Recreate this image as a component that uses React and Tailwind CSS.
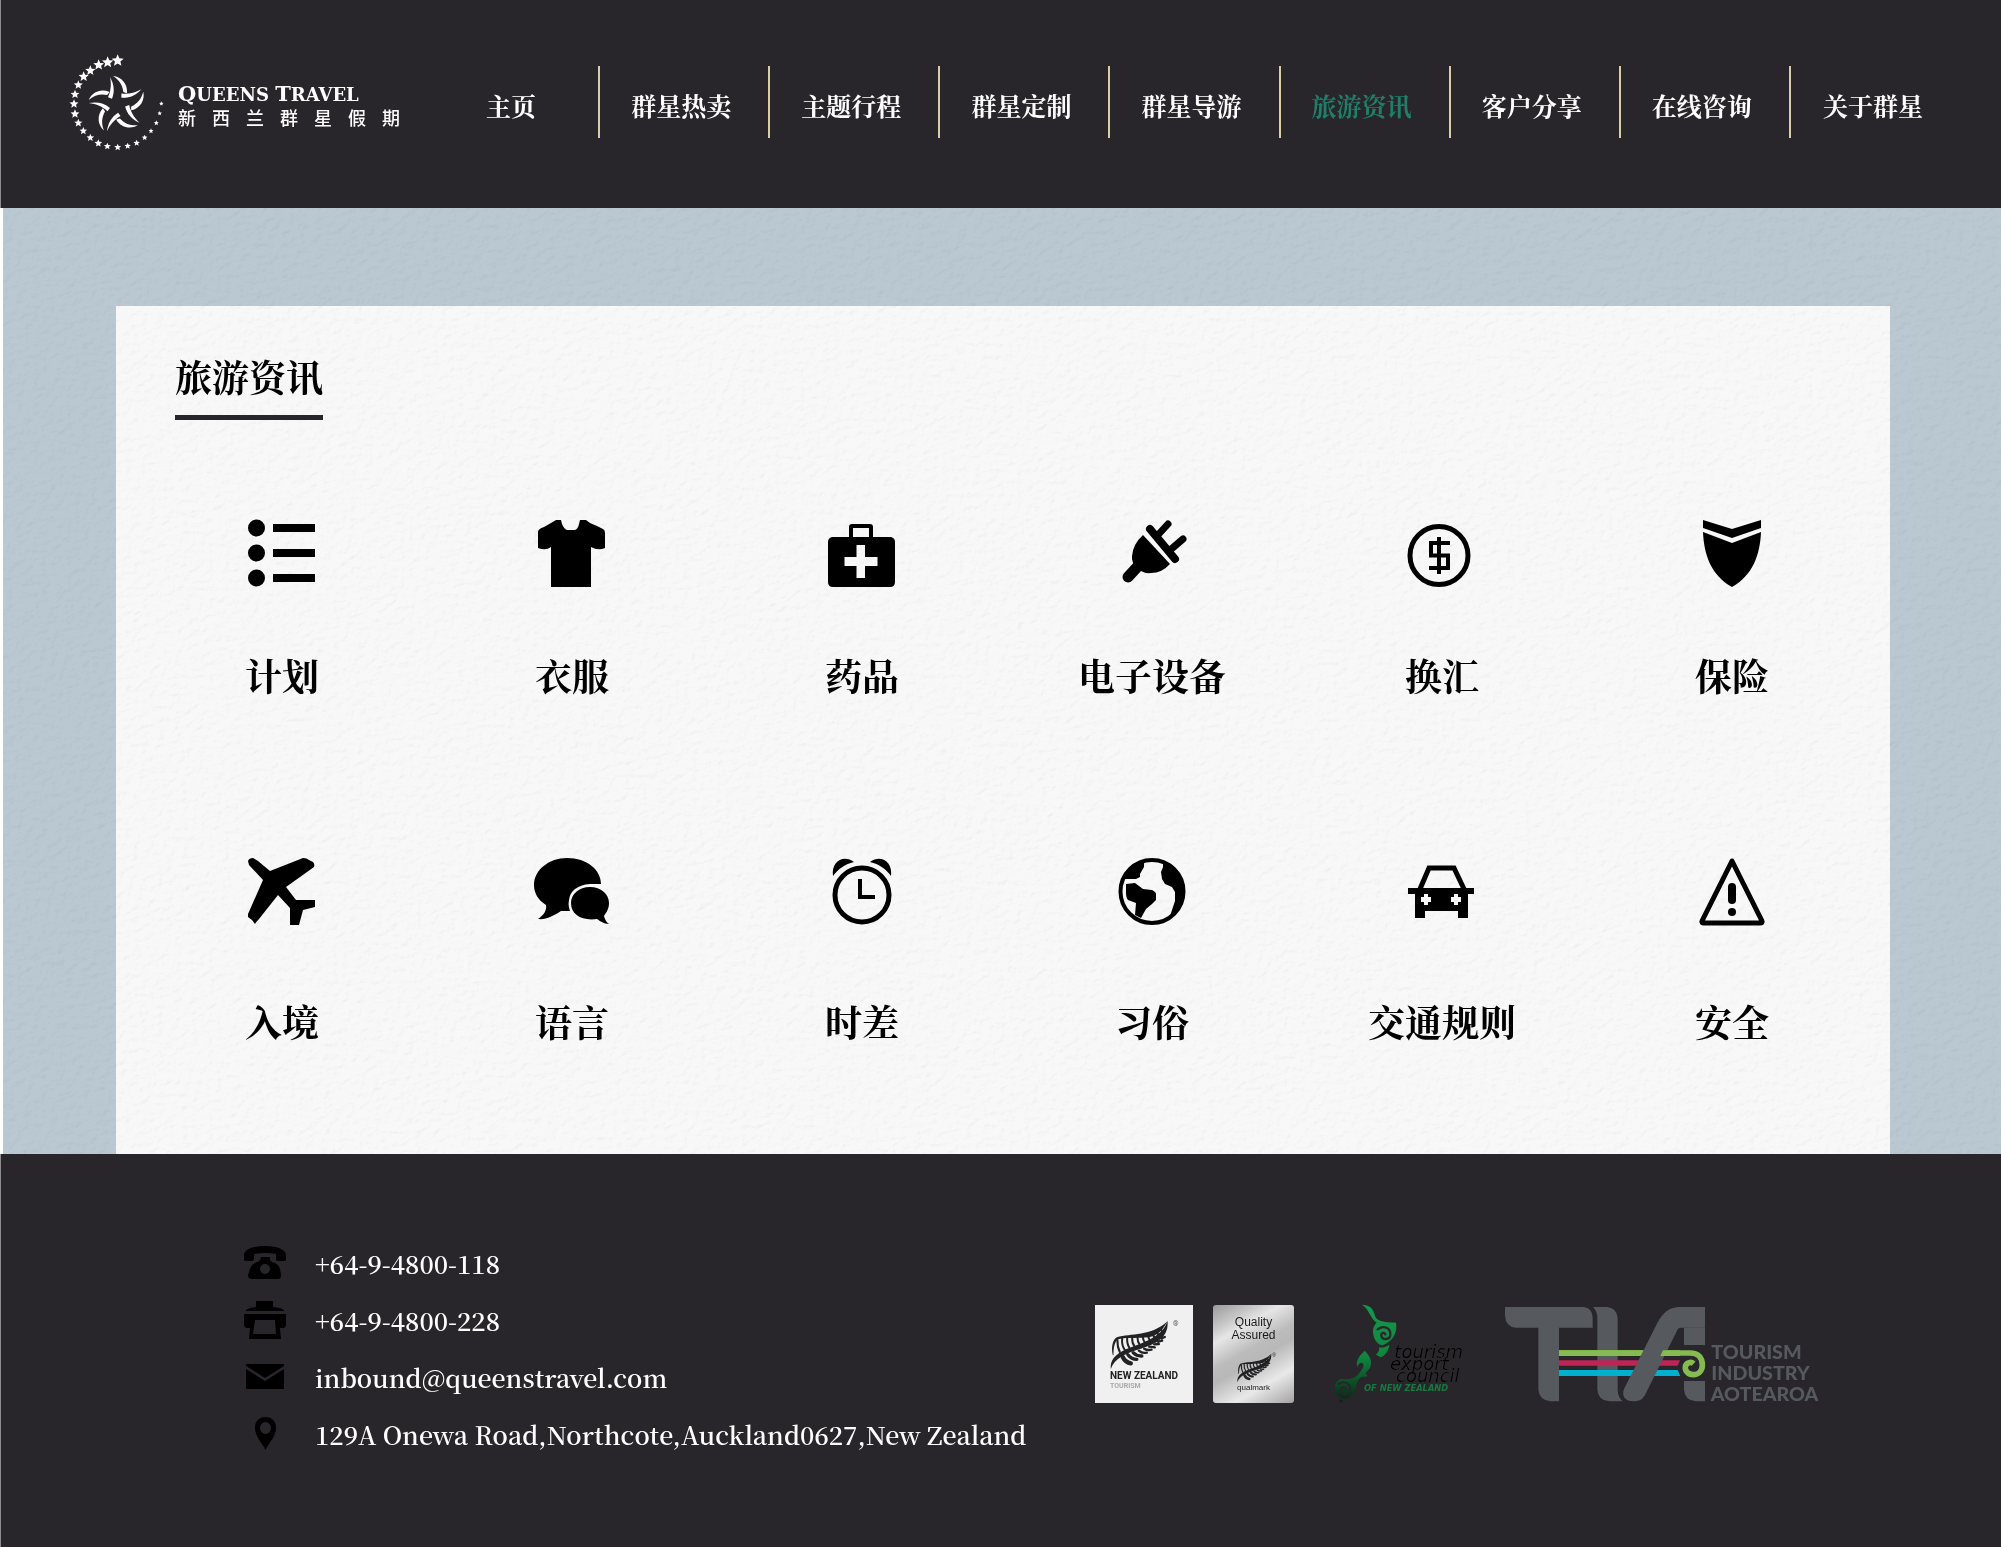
import React from "react";

const NAV = ["主页", "群星热卖", "主题行程", "群星定制", "群星导游", "旅游资讯", "客户分享", "在线咨询", "关于群星"];

const RING = [
  [203, 90, 19], [173, 95, 18], [146, 103, 17], [121, 120, 16], [101, 138, 16], [85, 163, 14],
  [75, 191, 14], [72, 220, 14], [75, 250, 14], [85, 277, 13], [100, 301, 12], [121, 321, 12],
  [145, 338, 12], [172, 347, 11], [203, 350, 11], [233, 346, 10], [260, 337, 10], [284, 321, 9],
  [303, 301, 8], [319, 277, 8], [329, 248, 7], [334, 219, 7],
];

function starPoints(cx, cy, r) {
  return Array.from({ length: 10 }, (_, i) => {
    const a = (Math.PI / 5) * i - Math.PI / 2;
    const k = i % 2 ? r * 0.45 : r;
    return `${(cx + k * Math.cos(a)).toFixed(1)},${(cy + k * Math.sin(a)).toFixed(1)}`;
  }).join(" ");
}

function StarLogo() {
  return (
    <svg viewBox="57 67 285 297" className="h-[99px] w-[95px] shrink-0" fill="#fff" aria-hidden="true">
      {RING.map(([x, y, r]) => (
        <polygon key={`${x}-${y}`} points={starPoints(x, y, r)} />
      ))}
      {[0, 72, 144, 216, 288].map((a) => (
        <g key={a} transform={`rotate(${a} 202 222)`}>
          <path d="M189 136C214 138 234 160 231 188L220 184C218 164 208 148 189 136Z" />
          <path d="M180 139C192 160 195 182 186 204L174 200C182 182 185 162 180 139Z" />
        </g>
      ))}
    </svg>
  );
}

function Icon({ w = 68, children }) {
  return (
    <svg viewBox={`0 0 ${w} 68`} width={w} height="68" fill="#000" className="overflow-visible" aria-hidden="true">
      {children}
    </svg>
  );
}

const TOPICS = [
  {
    label: "计划",
    icon: (
      <Icon>
        {[8, 33, 58].map((y) => (
          <g key={y}>
            <circle cx="8.5" cy={y} r="8.5" />
            <rect x="25" y={y - 4} width="42" height="8" />
          </g>
        ))}
      </Icon>
    ),
  },
  {
    label: "衣服",
    icon: (
      <Icon>
        <path d="M18 0H23L24 4Q26 9 29 10H37Q40 9 41 4L42 0H48L52 3L59 6L65 9Q67 10 67 13V28Q60 31 53 27V67H13V27Q8 31 0 28V12Q0 9 6 7L13 3Z" />
      </Icon>
    ),
  },
  {
    label: "药品",
    icon: (
      <Icon>
        <path fillRule="evenodd" d="M24 4H42Q45 4 45 7V17H63Q67 18 67 22V62Q67 67 62 67H5Q0 67 0 62V22Q0 18 4 17H21V7Q21 4 24 4ZM25 8V17H41V8ZM28.500 25V37H16.500V46H28.500V58H37V46H49.500V37H37V25Z" />
      </Icon>
    ),
  },
  {
    label: "电子设备",
    icon: (
      <Icon>
        <path d="M25 15L52 44Q44 53 33 53Q26 54 20 49Q13 43 14 36Q15 24 25 15Z" />
        <g stroke="#000" strokeLinecap="round">
          <path d="M10 57L22 44" strokeWidth="11" />
          <path d="M32 9L57 39" strokeWidth="8" />
          <path d="M50 4L39 16M65 19L51 31" strokeWidth="7" />
        </g>
      </Icon>
    ),
  },
  {
    label: "换汇",
    icon: (
      <Icon>
        <g fill="none" stroke="#000">
          <circle cx="31" cy="35.500" r="29" strokeWidth="5" />
          <path d="M31 17V54M42 23H23V35.500H40V48H21" strokeWidth="4" />
        </g>
      </Icon>
    ),
  },
  {
    label: "保险",
    icon: (
      <Icon>
        <path d="M5 0L34 9L63 0V8L34 18L5 8ZM5 12L34 23L63 12C62 35 55 55 34 67C13 55 6 35 5 12Z" />
      </Icon>
    ),
  },
  {
    label: "入境",
    icon: (
      <Icon>
        <path d="M0 3Q1 0 5 0L10 3L22 13L55 0Q59 0 61 2L65 4Q67 6 66 9L38 29L48 42H67V49L55 52L51 67H42V50L30 37L11 61Q8 64 7 66L4 62L0 59V56L15 22L1 7Z" />
      </Icon>
    ),
  },
  {
    label: "语言",
    icon: (
      <Icon w={76}>
        <path d="M33 0C53 0 67 12 67 26H56C43 27 36 33 35 42C34 47 35 50 36 53H27C19 58 12 62 4 61C10 57 13 52 12 47C4 42 0 35 0 27C0 12 15 0 33 0Z" />
        <path d="M56 29C67 29 75 36 75 45C75 51 72 55 70 58Q71 63 75 66C70 66 66 63 63 61C48 63 37 57 37 45C37 36 45 29 56 29Z" />
      </Icon>
    ),
  },
  {
    label: "时差",
    icon: (
      <Icon>
        <circle cx="34" cy="37" r="27" fill="none" stroke="#000" strokeWidth="5" />
        <path d="M5 18C3 4 15 -4 26 4C17 6 10 11 5 18ZM63 18C65 4 53 -4 42 4C51 6 58 11 63 18ZM30 21H34V37H47V41H30Z" />
      </Icon>
    ),
  },
  {
    label: "习俗",
    icon: (
      <Icon>
        <circle cx="34" cy="33.500" r="31.500" fill="none" stroke="#000" strokeWidth="4" />
        <path d="M6 21C9 12 16 5 26 3V9L22 16V19L18 21ZM8 26L17 25L21 28L25 31L34 32Q38 34 38 36V42L34 46L28 51L23 60L17 57L18 45L10 42Q8 40 8 35ZM45 4V9L43 14L44 21L47 26L54 29L57 34V43L52 58C62 52 66 43 66 33C66 20 58 9 45 4Z" />
      </Icon>
    ),
  },
  {
    label: "交通规则",
    icon: (
      <Icon>
        <path d="M12 31L21 10H46L56 31" fill="none" stroke="#000" strokeWidth="5" />
        <path fillRule="evenodd" d="M0 30H66V36H60V60H50V53H17V60H7V36H0ZM16 36V39H13V44H16V47H20V44H23V39H20V36ZM46 36V39H43V44H46V47H50V44H53V39H50V36Z" />
      </Icon>
    ),
  },
  {
    label: "安全",
    icon: (
      <Icon>
        <path d="M34 3L4 63Q3 65 6 65H62Q65 65 64 63Z" fill="none" stroke="#000" strokeWidth="5" strokeLinejoin="round" />
        <rect x="30" y="25" width="8" height="21" rx="4" />
        <circle cx="34" cy="54" r="4" />
      </Icon>
    ),
  },
];

const CONTACTS = [
  {
    text: "+64-9-4800-118",
    href: "tel:+6494800118",
    icon: (
      <svg viewBox="0 0 42 33" className="h-[33px] w-[42px]" aria-hidden="true">
        <path fillRule="evenodd" d="M21 0C34 0 42 4 42 9V14Q42 15 40 15H34Q32 15 32 13V8Q26 7 21 7T10 8V13Q10 15 8 15H2Q0 15 0 14V9C0 4 8 0 21 0ZM17 11H26V14Q27 16 31 17Q35 19 36 23L37 29Q37 33 34 33H8Q4 33 4 29L6 23Q7 19 11 17Q15 16 16 14ZM21 18A5 5 0 1 0 21 28A5 5 0 1 0 21 18Z" />
      </svg>
    ),
  },
  {
    text: "+64-9-4800-228",
    href: "tel:+6494800228",
    icon: (
      <svg viewBox="0 0 42 38" className="h-[38px] w-[42px]" aria-hidden="true">
        <path fillRule="evenodd" d="M12 0H29V6L36 7L40 9V10H2V9L6 7L12 6ZM0 13H42V25L40 27H36L37 38H5L6 27H2L0 25ZM11 19L9 33H32L31 19Z" />
      </svg>
    ),
  },
  {
    text: "inbound@queenstravel.com",
    href: "mailto:inbound@queenstravel.com",
    icon: (
      <svg viewBox="0 0 38 25" className="h-[25px] w-[38px]" aria-hidden="true">
        <path d="M0 0H38V2L19 14L0 2ZM0 5L19 17L38 5V25H0Z" />
      </svg>
    ),
  },
  {
    text: "129A Onewa Road,Northcote,Auckland0627,New Zealand",
    href: "#map",
    icon: (
      <svg viewBox="0 0 21 33" className="h-[33px] w-[21px]" aria-hidden="true">
        <path fillRule="evenodd" d="M10.500 0C17 0 21 4 21 11C21 19 14 26 10.500 33C7 26 0 19 0 11C0 4 4 0 10.500 0ZM10.500 5A5.500 6 0 1 0 10.500 17A5.500 6 0 1 0 10.500 5Z" />
      </svg>
    ),
  },
];

function Fern({ className }) {
  return (
    <svg viewBox="88 108 176 150" className={className} fill="#222124" aria-hidden="true">
      <path d="M90 255C86 225 110 205 145 192C200 172 248 152 260 110C265 158 230 180 180 194C140 206 100 222 90 255Z" />
      <path d="M96 214C90 190 96 166 108 160C150 148 210 158 260 112C240 150 220 158 200 160C160 164 130 160 112 166C102 172 98 190 98 213Z" />
      <g stroke="#222124" strokeLinecap="round" fill="none">
        <path d="M110 168Q109 188 117 204M124 163Q122 184 132 198M139 162Q138 180 146 192M154 162Q153 176 161 187M170 161Q170 172 176 181M186 160Q187 168 192 176M202 158Q204 164 208 170M217 154L222 163M230 148L235 156M242 139L246 147" strokeWidth="6" />
        <path d="M126 220Q134 236 150 238" strokeWidth="13" />
        <path d="M141 212Q152 226 168 226M157 206Q168 217 183 216" strokeWidth="10" />
        <path d="M174 200Q184 209 198 206M190 194Q200 200 212 197M205 188L222 190M220 181L234 180M232 173L244 170M242 163L252 159" strokeWidth="7" />
      </g>
    </svg>
  );
}

function NewZealandBadge() {
  return (
    <div className="flex h-[98px] w-[98px] flex-col bg-[#f0f0f0] pt-[15px] pl-[15px] font-['Roboto','Liberation_Sans',sans-serif]">
      <div className="flex items-start gap-1">
        <Fern className="h-[50px] w-[59px]" />
        <span className="text-[7px] leading-[8px] text-[#555]">®</span>
      </div>
      <span className="text-[10px] leading-[12px] font-bold whitespace-nowrap text-[#222124]">NEW ZEALAND</span>
      <span className="text-[7px] leading-[8px] font-bold text-[#a9a9a9]">TOURISM</span>
    </div>
  );
}

function QualmarkBadge() {
  return (
    <div className="flex h-[98px] w-[81px] flex-col items-center rounded-[3px] bg-[linear-gradient(150deg,#9a9a9a_0%,#c4c4c4_16%,#e6e6e6_27%,#bcbcbc_45%,#b8b8b8_55%,#e9e9e9_76%,#a2a2a2_100%)] pt-[11px] font-['Liberation_Sans',sans-serif] text-[#1b1a1c]">
      <span className="text-center text-[12px] leading-[13px]">Quality<br />Assured</span>
      <div className="mt-[11px] flex items-start pl-[6px]">
        <Fern className="h-[30px] w-[35px]" />
        <span className="text-[5px] leading-[4px]">®</span>
      </div>
      <span className="text-[8px] leading-[9px]">qualmark</span>
    </div>
  );
}

function ExportCouncilLogo() {
  return (
    <svg viewBox="762 60 426 300" className="h-[100px] w-[142px]" role="img" aria-label="tourism export council of New Zealand">
      <defs>
        <linearGradient id="koru" x1="0" y1="60" x2="0" y2="350" gradientUnits="userSpaceOnUse">
          <stop offset="0" stopColor="#16994a" />
          <stop offset="0.550" stopColor="#0f8540" />
          <stop offset="1" stopColor="#0b2415" />
        </linearGradient>
      </defs>
      <g fill="url(#koru)">
        <path d="M846 62C866 62 880 72 884 92C888 108 900 114 948 116C952 142 944 168 908 184C896 182 884 172 880 152C876 132 884 122 890 116C868 100 870 78 846 62Z" />
        <path d="M898 190C910 192 918 188 928 182C926 200 916 214 902 220L888 212C896 204 898 198 898 190Z" />
        <path d="M830 238C832 222 844 210 854 200C868 214 876 226 872 246C868 258 858 264 856 268L863 276C856 280 846 276 838 284C828 296 830 310 822 326C812 342 796 348 784 342C768 334 762 318 766 302C770 288 784 282 796 286C810 286 828 284 840 264C854 250 852 236 844 236C838 236 834 244 832 250Z" />
        <circle cx="783" cy="351" r="5" />
      </g>
      <g fill="none" stroke="#28262a" strokeLinecap="round">
        <path d="M893 136C912 122 932 132 931 152C930 168 906 170 904 154C904 146 914 144 916 151" strokeWidth="7" />
        <path d="M776 300C790 288 812 298 810 316C808 332 784 334 782 318C782 308 796 306 797 315" strokeWidth="6" />
      </g>
      <g fontFamily="'DejaVu Sans', sans-serif" fontStyle="italic" fill="#000" stroke="#4b4a4d" strokeWidth="0.500">
        <text x="943" y="221" fontSize="54">tourism</text>
        <text x="930" y="257" fontSize="54">export</text>
        <text x="948" y="293" fontSize="54">council</text>
      </g>
      <text x="852" y="321" fontSize="25" fontStyle="italic" fontWeight="700" fontFamily="'DejaVu Sans', sans-serif" fill="#17793f">
        OF NEW ZEALAND
      </text>
    </svg>
  );
}

function TiaLogo() {
  return (
    <svg viewBox="75 57 945 291" className="h-[97px] w-[315px]" role="img" aria-label="TIA Tourism Industry Aotearoa">
      <g fill="#56595e">
        <path d="M75 60H312Q338 64 338 92V122H237V343H212Q178 340 175 308V122H108Q77 120 75 86Z" />
        <path d="M339 60H382Q411 64 413 92V310Q414 332 428 343H388Q354 340 352 308V92Q352 74 339 60Z" />
        <path d="M612 122H675V174H612ZM612 282H675V343H648Q614 340 612 308Z" />
      </g>
      <path d="M237 220H600L593 236H237Z" fill="#bf2456" />
      <path d="M237 249H593L601 267H237Z" fill="#00b0cf" />
      <path d="M237 198H630C655 198 667 212 667 234C667 252 655 263 640 263C624 263 615 252 616 240C617 228 632 222 641 230" fill="none" stroke="#85bb50" strokeWidth="17" />
      <path d="M675 60V122H602C596 122 594 124 591 131L498 318C490 336 480 343 460 343C436 343 424 328 432 306L532 108C550 74 570 60 600 60Z" fill="#56595e" />
      <path d="M237 190H489L480 207H237ZM549 190H600V207H541Z" fill="#85bb50" />
      <g fontFamily="Lato, sans-serif" fontWeight="900" fontSize="59" fill="#56595e">
        <text x="694" y="215">TOURISM</text>
        <text x="694" y="280">INDUSTRY</text>
        <text x="692" y="342">AOTEAROA</text>
      </g>
    </svg>
  );
}

function Plaster() {
  return (
    <svg className="pointer-events-none absolute inset-0 h-full w-full opacity-25 mix-blend-multiply" aria-hidden="true">
      <filter id="plaster" x="0" y="0" width="100%" height="100%">
        <feTurbulence type="fractalNoise" baseFrequency="0.12 0.16" numOctaves="4" seed="7" result="n" />
        <feDiffuseLighting in="n" lightingColor="#fff" surfaceScale="1.2" diffuseConstant="1.150">
          <feDistantLight azimuth="225" elevation="60" />
        </feDiffuseLighting>
      </filter>
      <rect width="100%" height="100%" filter="url(#plaster)" />
    </svg>
  );
}

export default function App() {
  return (
    <div className="flex min-h-screen flex-col bg-[#28262a] font-['Noto_Serif_CJK_SC','Noto_Serif_SC','Source_Han_Serif_SC','Liberation_Serif','Noto_Sans_CJK_SC',serif]">
      <header className="flex h-52 items-center border-l border-[#8d8d8f] pr-10 pb-1 pl-[68px]">
        <a href="#home" className="flex w-[361px] shrink-0 items-center gap-[14px] text-white">
          <StarLogo />
          <span className="flex w-[222px] flex-col pt-[6px]">
            <span className="font-['DejaVu_Serif',serif] text-[18px] leading-[22px] font-bold whitespace-nowrap">
              <span className="text-[21px]">Q</span>UEENS <span className="text-[21px]">T</span>RAVEL
            </span>
            <span className="flex justify-between font-['Noto_Sans_CJK_SC',sans-serif] text-[18px] leading-[22px] font-medium">
              {"新西兰群星假期".split("").map((c) => (
                <span key={c}>{c}</span>
              ))}
            </span>
          </span>
        </a>
        <nav className="grid flex-1 grid-cols-9">
          {NAV.map((item, i) => (
            <a
              key={item}
              href="#nav"
              className={`flex h-[72px] items-center justify-center border-[#d8cfa8] pt-[5px] pr-[6px] text-[25px] leading-8 font-bold whitespace-nowrap ${i < 8 ? "border-r-2" : ""} ${i === 5 ? "text-[#1f7f6a]" : "text-white"}`}
            >
              {item}
            </a>
          ))}
        </nav>
      </header>

      <main className="relative border-l-3 border-white bg-[#b9c8d1] pt-[98px] pr-[111px] pl-[113px]">
        <section className="bg-[#f8f8f8] pt-[46px] pb-[106px]">
          <h1 className="ml-[59px] inline-block border-b-5 border-[#28262a] pb-[14px] text-[37px] leading-[49px] font-bold">旅游资讯</h1>
          <ul className="mt-[100px] grid grid-cols-6 gap-y-[272px] pr-[13px] pl-[21px]">
            {TOPICS.slice(0, 6).map((t) => (
              <li key={t.label}>
                <a href="#topic" className="flex flex-col items-center gap-[60px] text-[37px] leading-[54px] font-bold">
                  {t.icon}
                  {t.label}
                </a>
              </li>
            ))}
          </ul>
          <ul className="mt-[156px] grid grid-cols-6 pr-[13px] pl-[21px]">
            {TOPICS.slice(6).map((t) => (
              <li key={t.label}>
                <a href="#topic" className="flex flex-col items-center gap-[68px] text-[37px] leading-[54px] font-bold">
                  {t.icon}
                  {t.label}
                </a>
              </li>
            ))}
          </ul>
        </section>
        <Plaster />
      </main>

      <footer className="flex flex-1 items-start justify-between border-l border-[#8d8d8f] pt-[80px] pr-[181px] pb-[78px] pl-[243px]">
        <address className="flex flex-col not-italic">
          {CONTACTS.map((c) => (
            <a key={c.text} href={c.href} className="flex h-[57px] items-center gap-[29px] text-[25px] leading-8 font-semibold whitespace-nowrap text-white">
              <span className="flex w-[42px] justify-center">{c.icon}</span>
              {c.text}
            </a>
          ))}
        </address>
        <div className="mt-[70px] flex items-center">
          <NewZealandBadge />
          <div className="ml-5"><QualmarkBadge /></div>
          <div className="ml-10"><ExportCouncilLogo /></div>
          <div className="ml-[29px]"><TiaLogo /></div>
        </div>
      </footer>
    </div>
  );
}
